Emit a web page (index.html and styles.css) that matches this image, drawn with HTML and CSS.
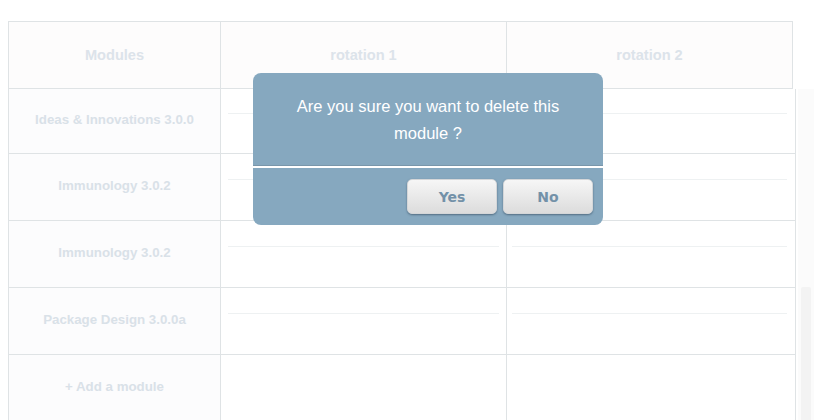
FILE: index.html
```html
<!DOCTYPE html>
<html>
<head>
<meta charset="utf-8">
<link rel="stylesheet" href="styles.css">
</head>
<body>
<div class="page">
  <div class="head-row">
    <div class="hcell first">Modules</div>
    <div class="hcell">rotation 1</div>
    <div class="hcell">rotation 2</div>
  </div>
  <div class="body-wrap">
    <div class="rows">
      <div class="row"><div class="mcell">Ideas &amp; Innovations 3.0.0</div><div class="rcell"><span class="inner"></span></div><div class="rcell last"><span class="inner"></span></div></div>
      <div class="row"><div class="mcell">Immunology 3.0.2</div><div class="rcell"><span class="inner"></span></div><div class="rcell last"><span class="inner"></span></div></div>
      <div class="row"><div class="mcell">Immunology 3.0.2</div><div class="rcell"><span class="inner"></span></div><div class="rcell last"><span class="inner"></span></div></div>
      <div class="row"><div class="mcell">Package Design 3.0.0a</div><div class="rcell"><span class="inner"></span></div><div class="rcell last"><span class="inner"></span></div></div>
      <div class="row"><div class="mcell">+ Add a module</div><div class="rcell"></div><div class="rcell last"></div></div>
    </div>
    <div class="scroll"><div class="thumb"></div></div>
  </div>
</div>
<div class="dialog">
  <div class="msg">Are you sure you want to delete this module ?</div>
  <div class="actions">
    <button class="btn">Yes</button>
    <button class="btn">No</button>
  </div>
</div>
</body>
</html>
```
FILE: styles.css
```css
html, body { margin: 0; padding: 0; background: #fff; }
body {
  font-family: "Liberation Sans", Arial, sans-serif;
  width: 826px;
  height: 420px;
  overflow: hidden;
  position: relative;
}
.page { padding: 21px 0 0 8px; }
.head-row {
  display: flex;
  width: 784px;
  border-top: 1px solid #dfe3e5;
  border-left: 1px solid #dfe3e5;
}
.hcell {
  width: 285px;
  height: 66px;
  border-right: 1px solid #dfe3e5;
  border-bottom: 1px solid #dfe3e5;
  background: #fdfcfc;
  color: #dce3ea;
  font-weight: bold;
  font-size: 14.6px;
  display: flex;
  align-items: center;
  justify-content: center;
}
.hcell.first { width: 211px; }
.body-wrap { display: flex; }
.rows {
  width: 788px;
  border-left: 1px solid #dfe3e5;
}
.row { display: flex; height: 67px; }
.mcell {
  width: 212px;
  border-right: 1px solid #dfe3e5;
  border-bottom: 1px solid #dfe3e5;
  background: #fcfcfd;
  color: #d9e1e8;
  font-weight: bold;
  font-size: 13.3px;
  display: flex;
  align-items: center;
  justify-content: center;
  padding-bottom: 3px;
  box-sizing: border-box;
}
.rcell {
  width: 286px;
  border-right: 1px solid #dfe3e5;
  border-bottom: 1px solid #dfe3e5;
  padding: 25px 7px 0 7px;
  box-sizing: border-box;
}
.rcell.last { width: 289px; padding: 25px 8px 0 5px; }
.inner { display: block; height: 1px; background: #eef1f2; }
.row:first-child { height: 65px; }
.row:first-child .rcell { padding-top: 24px; }
.scroll {
  width: 16px;
  margin-left: 1px;
  background: #fbfbfb;
  display: flex;
  flex-direction: column;
  padding: 198px 3px 0 3px;
  box-sizing: border-box;
  height: 340px;
}
.thumb { flex: 1; background: #f3f3f3; border-radius: 2px; }
.dialog {
  position: absolute;
  left: 253px;
  top: 73px;
  width: 350px;
  height: 152px;
  background: #86a8bf;
  border-radius: 8px;
  display: flex;
  flex-direction: column;
}
.msg {
  color: #fff;
  font-size: 16.5px;
  line-height: 27px;
  text-align: center;
  padding: 20px 36px 0 36px;
  height: 93px;
  flex: none;
  box-sizing: border-box;
  border-bottom: 1px solid #7996aa;
}
.actions {
  border-top: 2px solid #fff;
  display: flex;
  justify-content: flex-end;
  gap: 6px;
  padding: 11px 10px 0 0;
}
.btn {
  width: 90px;
  height: 35px;
  border: 1px solid #d4d6d8;
  border-radius: 5px;
  background: linear-gradient(#f6f6f6, #dcdcdc);
  box-shadow: 0 1px 2px rgba(40, 60, 80, 0.55);
  color: #7391a8;
  font-family: "DejaVu Sans", "Liberation Sans", sans-serif;
  font-weight: bold;
  font-size: 14px;
  padding: 0;
}
```
